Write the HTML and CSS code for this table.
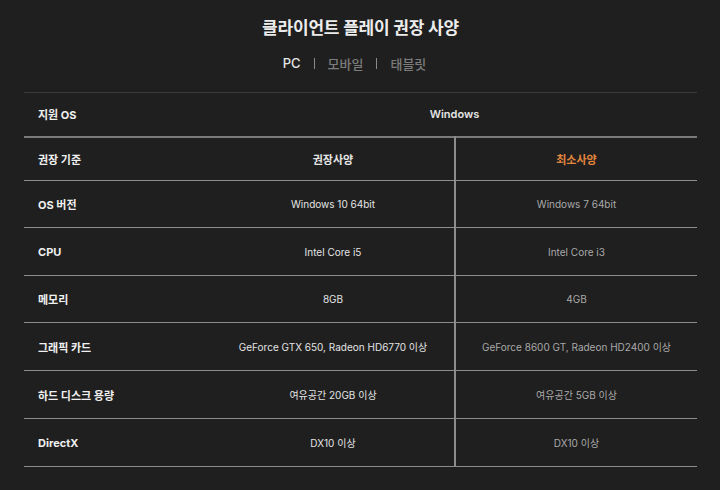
FILE: index.html
```html
<!DOCTYPE html>
<html lang="ko">
<head>
<meta charset="utf-8">
<link rel="stylesheet" href="styles.css">
</head>
<body>
<section class="spec">
  <h1 class="title">클라이언트 플레이 권장 사양</h1>
  <nav class="tabs">
    <span class="tab active">PC</span>
    <span class="sep"></span>
    <span class="tab">모바일</span>
    <span class="sep"></span>
    <span class="tab">태블릿</span>
  </nav>
  <table class="table">
    <colgroup><col class="c1"><col class="c2"><col class="c3"></colgroup>
    <tr class="r-os">
      <th>지원 OS</th>
      <td colspan="2" class="rec">Windows</td>
    </tr>
    <tr class="r-head">
      <th>권장 기준</th>
      <td class="rec strong">권장사양</td>
      <td class="min orange">최소사양</td>
    </tr>
    <tr class="short"><th>OS 버전</th><td class="rec">Windows 10 64bit</td><td class="min">Windows 7 64bit</td></tr>
    <tr><th>CPU</th><td class="rec">Intel Core i5</td><td class="min">Intel Core i3</td></tr>
    <tr class="short"><th>메모리</th><td class="rec">8GB</td><td class="min">4GB</td></tr>
    <tr><th>그래픽 카드</th><td class="rec">GeForce GTX 650, Radeon HD6770 이상</td><td class="min">GeForce 8600 GT, Radeon HD2400 이상</td></tr>
    <tr><th>하드 디스크 용량</th><td class="rec">여유공간 20GB 이상</td><td class="min">여유공간 5GB 이상</td></tr>
    <tr><th>DirectX</th><td class="rec">DX10 이상</td><td class="min">DX10 이상</td></tr>
  </table>
</section>
</body>
</html>
```
FILE: styles.css
```css
html, body {
  margin: 0;
  padding: 0;
  background: #1f1f1f;
  width: 720px;
  height: 490px;
  overflow: hidden;
}
body {
  font-family: "Inter", "Noto Sans CJK KR", sans-serif;
  color: #e6e6e6;
}
.spec {
  padding: 17px 23px 0 24px;
}
.title {
  margin: 0;
  text-align: center;
  font-size: 17px;
  font-weight: 700;
  line-height: 22px;
  color: #ececec;
  letter-spacing: -0.2px;
}
.tabs {
  display: flex;
  justify-content: center;
  align-items: center;
  gap: 13px;
  margin-top: 15px;
  padding-right: 12px;
  height: 18px;
  font-size: 13px;
}
.tab {
  color: #7c7c7c;
  font-weight: 500;
}
.tab.active {
  color: #e6e6e6;
}
.sep {
  width: 1px;
  height: 11px;
  background: #8a8a8a;
}
.table {
  margin-top: 20px;
  width: 673px;
  border-collapse: collapse;
  table-layout: fixed;
  font-size: 10px;
}
.c1 { width: 188px; }
.c2 { width: 243px; }
.c3 { width: 242px; }
.table tr {
  height: 48px;
  border-bottom: 1px solid #8c8c8c;
}
.table tr.short {
  height: 47px;
}
.table tr.r-os {
  height: 44px;
  border-top: 1px solid #3a3a3a;
  border-bottom: 2px solid #7a7a7a;
}
.table tr.r-head {
  height: 44px;
}
.table th {
  text-align: left;
  padding: 0 0 0 14px;
  font-weight: 700;
  font-size: 11px;
  color: #f0f0f0;
}
.table td {
  text-align: center;
  padding: 0;
}
.rec { color: #e4e4e4; }
.min {
  color: #a9a9a9;
  border-left: 2px solid #8c8c8c;
}
.strong {
  font-weight: 700;
  font-size: 11px;
}
.orange {
  color: #e2853e;
  font-weight: 700;
  font-size: 11px;
}
.r-os .rec {
  font-weight: 600;
  font-size: 11px;
}
```
